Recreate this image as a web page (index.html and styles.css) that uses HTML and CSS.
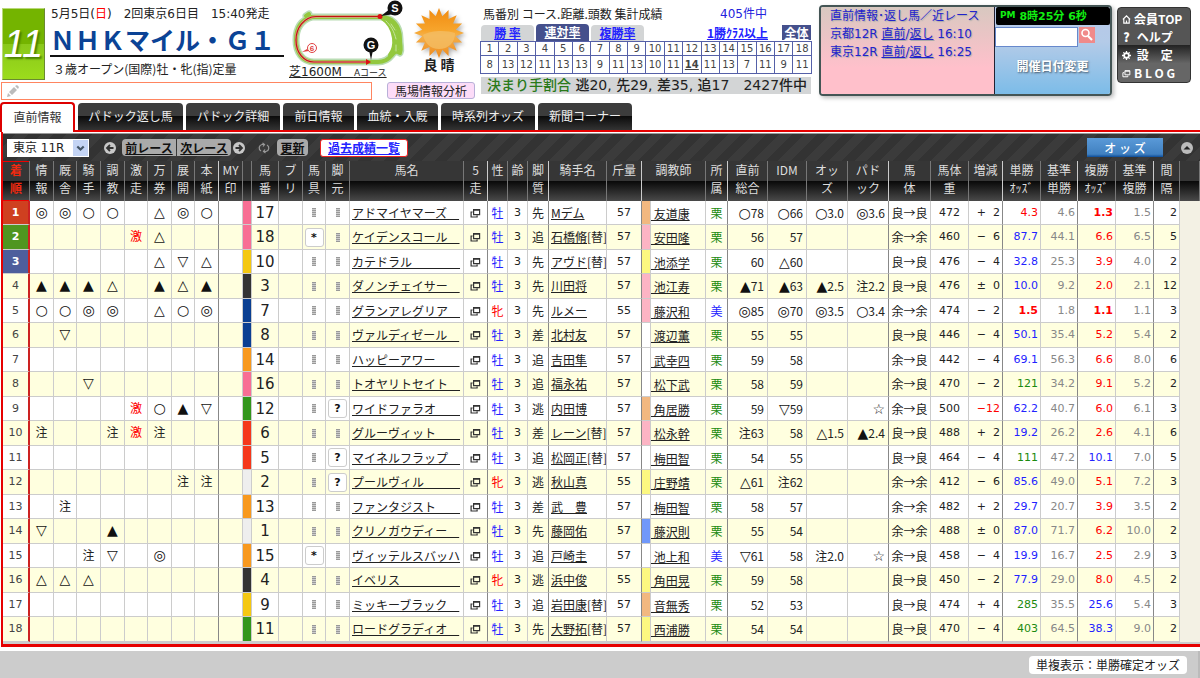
FILE: index.html
```html
<!DOCTYPE html>
<html lang="ja">
<head>
<meta charset="utf-8">
<title>NHKマイル・G1 直前情報</title>
<link rel="stylesheet" href="styles.css">
</head>
<body>
<svg class="defs" aria-hidden="true">
  <symbol id="windows" viewBox="0 0 11 10"><path d="M3.6 1.6h6v5h-6z M3.6 2.1h6 M2.6 4H1.1v5h6V7.6" fill="none" stroke="currentColor" stroke-width="1.2"/></symbol>
</svg>

<header class="top">
  <section class="race">
    <div class="race-main">
      <div class="race-no">11</div>
      <div class="race-info">
        <p class="date">5月5日(<span class="red">日</span>)　2回東京6日目　15:40発走</p>
        <h1>ＮＨＫマイル・Ｇ１</h1>
        <p class="terms">３歳オープン(国際)牡・牝(指)定量</p>
      </div>
      <div class="course">
        <svg viewBox="0 0 116 66" class="course-map" role="img" aria-label="コース図">
          <g fill="none" stroke-linejoin="round" stroke-linecap="round">
            <path d="M16 16l3-2M22 17h68c12 0 20 8 20 22 0 8 2 10 0 14-3-2-5-2-8 2-4 5-8 7-14 7H24C12 62 6 52 6 40s5-20 16-23z" stroke="#b9dcb4" stroke-width="7"/>
            <path d="M16 16l3-2M22 17h68c12 0 20 8 20 22 0 8 2 10 0 14-3-2-5-2-8 2-4 5-8 7-14 7H24C12 62 6 52 6 40s5-20 16-23z" stroke="#93c83e" stroke-width="4"/>
            <path d="M92 18c8 5 11 12 12 20s-1 13-4 17M97 19c5 4 9 12 10 20v10" stroke="#93c83e" stroke-width="4"/>
            <path d="M96 21c5 5 8 10 10 18M101 24l4 6M106 45v6" stroke="#c5e39c" stroke-width="1"/>
            <path d="M90 16.5H26C14 17 6 28 6 40c0 13 8 22 18 22h54" stroke="#e0a08a" stroke-width="2.4"/>
            <path d="M90 16.5H26C14 17 6 28 6 40c0 13 8 22 18 22h54" stroke="#c41212" stroke-width="1.2"/>
          </g>
          <circle cx="90" cy="16.500" r="2.500" fill="#d11"/>
          <path d="M76 59l5 3-5 3z" fill="#d11"/>
          <path d="M91 16l10-8 4 6z M79 50h4l-2 10z" fill="#111"/>
          <circle cx="105" cy="8" r="7.500" fill="#111"/>
          <circle cx="81" cy="45" r="7.500" fill="#111"/>
          <circle cx="22" cy="48" r="4.500" fill="#fff" stroke="#e04040"/>
          <path d="M17 49l-5 3 7-1z" fill="#e04040"/>
          <text x="105" y="12" class="map-letter">S</text>
          <text x="81" y="49" class="map-letter">G</text>
          <text x="22" y="51" class="map-corner">6</text>
        </svg>
        <a href="#course" class="course-name">芝1600M　<small>Aコース</small></a>
      </div>
      <div class="weather">
        <svg viewBox="-26 -26 52 52" class="sun" role="img" aria-label="晴">
          <defs><linearGradient id="sunfill" x1="0" y1="0" x2="0" y2="1"><stop offset="0" stop-color="#f08a10"/><stop offset=".45" stop-color="#f7a52c"/><stop offset=".55" stop-color="#f5b04a"/><stop offset="1" stop-color="#ee8a1c"/></linearGradient></defs>
          <path fill="url(#sunfill)" d="M25 0L16.700 3.300 23.100 9.600 14.100 9.500 17.700 17.700 9.500 14.100 9.600 23.100 3.300 16.700 0 25-3.300 16.700-9.600 23.100-9.500 14.100-17.700 17.700-14.100 9.500-23.100 9.600-16.700 3.300-25 0-16.700-3.300-23.100-9.600-14.100-9.500-17.700-17.700-9.500-14.100-9.600-23.100-3.300-16.700 0-25 3.300-16.700 9.600-23.100 9.500-14.100 17.700-17.700 14.100-9.500 23.100-9.600 16.700-3.300z"/>
          <path fill="#f4bd63" opacity=".8" d="M-16 2C-8-3 8-3 16 0 16 10 9 16 0 16S-14 10-16 2z"/>
        </svg>
        <span>良 晴</span>
      </div>
    </div>
    <div class="memo-row">
      <label class="memo">
        <svg viewBox="0 0 14 14" aria-hidden="true"><path d="M1 13l1-4 3 3z M3 8l5-5 3 3-5 5z M9 2l2-1 2 2-1 2z" fill="#bbb"/></svg>
        <input type="text" aria-label="メモ">
      </label>
      <button class="baba">馬場情報分析</button>
    </div>
  </section>

  <section class="stats">
    <div class="stats-head"><span>馬番別 コース.距離.頭数 集計成績</span><span class="count">405件中</span></div>
    <div class="stats-tabs">
      <a href="#win">勝 率</a><a href="#ren" class="on">連対率</a><a href="#fuku">複勝率</a>
      <a href="#class" class="class-link">1勝ｸﾗｽ以上</a><a href="#all" class="all">全体</a>
    </div>
    <table class="rates">
      <tr><td>1<td>2<td>3<td>4<td>5<td>6<td>7<td>8<td>9<td>10<td>11<td>12<td>13<td>14<td>15<td>16<td>17<td>18</tr>
      <tr><td>8<td>13<td>12<td>11<td>13<td>13<td>9<td>11<td>13<td>10<td>11<td><b>14</b><td>11<td>13<td>7<td>11<td>9<td>11</tr>
    </table>
    <p class="kimarite"><span>決まり手割合</span> 逃20, 先29, 差35, 追17　2427件中</p>
  </section>

  <section class="panel">
    <div class="near">
      <p>直前情報･返し馬／近レース</p>
      <p>京都12R <a href="#k1">直前</a>/<a href="#k2">返し</a> 16:10</p>
      <p>東京12R <a href="#t1">直前</a>/<a href="#t2">返し</a> 16:25</p>
    </div>
    <div class="tools">
      <div class="clock"><small>PM</small> 8時25分 6秒</div>
      <div class="search">
        <input type="text" aria-label="検索">
        <button aria-label="検索する"><svg viewBox="0 0 16 16"><circle cx="6.500" cy="6" r="3.500" fill="none" stroke="#fff" stroke-width="1.600"/><path d="M9 9l4 4" stroke="#fff" stroke-width="2.200"/></svg></button>
      </div>
      <button class="date-change">開催日付変更</button>
    </div>
  </section>

  <nav class="menu">
    <a href="#top"><svg viewBox="0 0 10 10"><path d="M1 5l4-4 4 4M2 4v5h6V4M5 9V6" fill="none" stroke="currentColor" stroke-width="1.300"/></svg>会員TOP</a>
    <a href="#help"><b>?</b>&nbsp;ヘルプ</a>
    <a href="#config"><svg viewBox="0 0 10 10"><circle cx="5" cy="5" r="2.500" fill="none" stroke="currentColor" stroke-width="2"/><path d="M5 0v10M0 5h10M1.500 1.500l2 2M6.500 6.500l2 2M8.500 1.500l-2 2M3.500 6.500l-2 2" stroke="currentColor" stroke-width="1.400"/><circle cx="5" cy="5" r="1.500" fill="#333"/></svg>&nbsp;設　定</a>
    <a href="#blog"><svg><use href="#windows"/></svg>B L O G</a>
  </nav>
</header>

<nav class="tabs">
  <a href="#tab1" class="on">直前情報</a><a href="#tab2" class="w2">パドック返し馬</a><a href="#tab3" class="w3">パドック詳細</a><a href="#tab4" class="w4">前日情報</a><a href="#tab5" class="w5">血統・入厩</a><a href="#tab6" class="w6">時系列オッズ</a><a href="#tab7" class="w6">新聞コーナー</a>
</nav>

<main class="board">
  <div class="bar">
    <span class="picker"><select aria-label="レース選択"><option>東京 11R</option></select><svg viewBox="0 0 14 15" aria-hidden="true"><path d="M4 6l3 3 3-3" fill="none" stroke="#456" stroke-width="2"/></svg></span>
    <div class="pager">
      <svg viewBox="0 0 12 12" class="dot"><circle cx="6" cy="6" r="6" fill="#c8c8c8"/><path d="M9.500 6H4M6 3L3 6l3 3" fill="none" stroke="#333" stroke-width="1.800"/></svg>
      <div class="pair"><button>前レース</button><button>次レース</button></div>
      <svg viewBox="0 0 12 12" class="dot"><circle cx="6" cy="6" r="6" fill="#c8c8c8"/><path d="M2.500 6H8M6 3l3 3-3 3" fill="none" stroke="#333" stroke-width="1.800"/></svg>
    </div>
    <div class="reload"><svg viewBox="0 0 12 12" class="dot"><path d="M6 2.500H4A3.500 3.500 0 003 9M4.500 1L6.500 2.500 5 4.500M6 9.500h2A3.500 3.500 0 009 3M7.500 11l-2-1.500L7 7.500" fill="none" stroke="#999" stroke-width="1.200"/></svg><button>更新</button></div>
    <a href="#past" class="past">過去成績一覧</a>
    <button class="odds">オ ッ ズ</button>
    <svg viewBox="0 0 12 12" class="dot"><circle cx="6" cy="6" r="6" fill="#bbb"/><path d="M2.500 7.500L6 4l3.500 3.500z" fill="#222"/></svg>
  </div>
  <table class="entries">
    <colgroup>
      <col class="c27"><col class="c24"><col class="c23"><col class="c24"><col class="c24"><col class="c23"><col class="c24"><col class="c23"><col class="c24">
      <col class="c24"><col class="c9"><col class="c27"><col class="c24"><col class="c23"><col class="c24"><col class="c114"><col class="c24">
      <col class="c20"><col class="c20"><col class="c21"><col class="c58"><col class="c35"><col class="c9"><col class="c55"><col class="c22">
      <col class="c40"><col class="c39"><col class="c41"><col class="c41"><col class="c42"><col class="c38"><col class="c34">
      <col class="c38"><col class="c37"><col class="c38"><col class="c38"><col class="c26"><col>
    </colgroup>
    <thead><tr>
      <th class="order">着<br>順</th><th>情<br>報</th><th>厩<br>舎</th><th>騎<br>手</th><th>調<br>教</th><th>激<br>走</th><th>万<br>券</th><th>展<br>開</th><th class="s">本<br>紙</th>
      <th>MY<br>印</th><th></th><th>馬<br>番</th><th>ブ<br>リ</th><th>馬<br>具</th><th>脚<br>元</th><th>馬名</th><th class="s">5<br>走</th>
      <th>性</th><th>齢</th><th class="s">脚<br>質</th><th>騎手名</th><th class="s">斤量</th><th colspan="2">調教師</th><th class="s">所<br>属</th>
      <th>直前<br>総合</th><th>IDM</th><th>オッ<br>ズ</th><th class="s">パド<br>ック</th><th>馬<br>体</th><th>馬体<br>重</th><th class="s">増減</th>
      <th>単勝<br>ｵｯｽﾞ</th><th class="s">基準<br>単勝</th><th>複勝<br>ｵｯｽﾞ</th><th class="s">基準<br>複勝</th><th>間<br>隔</th><th></th>
    </tr></thead>
    <tbody id="rows"></tbody>
  </table>
</main>

<footer class="foot"><button>単複表示：単勝確定オッズ</button></footer>
<script src="entries.js"></script>
</body>
</html>
```
FILE: styles.css
```css
* { box-sizing: border-box; }
body {
  margin: 0;
  min-height: 100vh;
  display: flex;
  flex-direction: column;
  background: #fff;
  color: #222;
  font: 12px/18px "DejaVu Sans", "Noto Sans CJK JP", sans-serif;
}
p, h1 { margin: 0; }
button, input, select { font: inherit; color: inherit; margin: 0; padding: 0; border: 0; }
button { cursor: pointer; white-space: nowrap; }
a { color: inherit; }
svg { display: block; flex: none; }
.defs { width: 0; height: 0; position: absolute; }
.red { color: #f00; }

/* page header */
.top { display: flex; align-items: flex-start; height: 102px; white-space: nowrap; }
.race { width: 475px; margin-right: 5px; font-family: "Noto Sans CJK JP", sans-serif; }
.race-main { display: flex; height: 82px; }
.race-no {
  width: 43px; height: 72px; margin: 8px 5px 0 2px;
  border: 1px solid #7a8f50; border-color: #b8d878 #6a8a30 #6a8a30 #b8d878;
  background: linear-gradient(#74b400 0 50%, #8ac81a 50%, #9cdc1c);
  color: #fff; font: italic 38px/70px "Liberation Sans Narrow", "Liberation Sans", sans-serif;
  text-align: center; text-shadow: 2px 2px 2px #4a8000;
}
.race-info { width: 234px; margin-right: 5px; }
.date { font: 12px/18px "DejaVu Sans", "Noto Sans CJK JP", sans-serif; padding: 5px 0 0 1px; }
h1 { font-size: 25px; line-height: 32px; font-weight: bold; color: #0b4396; border-bottom: 2px solid #111; }
.terms { font-size: 12px; line-height: 18px; padding: 3px 0 0 3px; }
.course { width: 122px; }
.course-map { width: 116px; height: 66px; margin-left: 1px; }
.map-letter { font: bold 11px "Liberation Sans", sans-serif; fill: #fff; text-anchor: middle; }
.map-corner { font: bold 8px "Liberation Sans", sans-serif; fill: #e04040; text-anchor: middle; }
.course-name { display: block; line-height: 13px; font-size: 12px; font-family: "DejaVu Sans", "Noto Sans CJK JP", sans-serif; }
.course-name small { font-size: 9px; }
.weather { display: flex; flex-direction: column; align-items: center; width: 56px; padding-top: 7px; font-weight: bold; font-size: 14px; line-height: 10px; }
.sun { width: 52px; height: 52px; filter: drop-shadow(2px 2px 2px #aaa); }
.memo-row { display: flex; justify-content: space-between; }
.memo { display: flex; align-items: center; width: 371px; height: 18px; margin-left: 1px; border: 1px solid #ff8560; }
.memo svg { width: 14px; height: 14px; margin: 0 4px; }
.memo input { flex: 1; min-width: 0; height: 14px; outline: 0; background: none; }
.baba { width: 88px; height: 17px; border: 1px solid #b8b0d8; border-radius: 3px; background: #fcdcf8; line-height: 15px; }

.stats { width: 332px; margin-right: 7px; font-family: "Noto Sans CJK JP", sans-serif; }
.stats-head { display: flex; padding: 5px 0 0 3px; line-height: 18px; }
.count { margin-left: auto; margin-right: 45px; color: #22d; font-family: "DejaVu Sans", "Noto Sans CJK JP", sans-serif; }
.stats-tabs { display: flex; align-items: flex-end; gap: 2px; height: 18px; padding: 0 1px; font-weight: bold; line-height: 16px; }
.stats-tabs a { width: 53px; height: 16px; text-align: center; color: #22f; background: #d3d5d6; border-radius: 4px 4px 0 0; }
.stats-tabs .on { color: #fff; background: #45508c; height: 17px; }
.stats-tabs .class-link { width: auto; margin-left: auto; background: none; }
.stats-tabs .all { width: 29px; margin-left: 12px; color: #fff; background: #45508c; border-radius: 0; height: 15px; margin-bottom: 1px; line-height: 15px; }
.rates { width: 100%; table-layout: fixed; border-collapse: collapse; font-size: 10px; line-height: 13px; text-align: center; color: #444; font-family: "DejaVu Sans", sans-serif; }
.rates td { border: 1px solid #5560a8; padding: 0; }
.rates tr:last-child td { height: 18px; }
.rates b { text-decoration: underline; }
.kimarite { margin: 3px 1px 0; background: #d3d5d6; font: 500 14px/17px "DejaVu Sans", "Noto Sans CJK JP", sans-serif; color: #222; padding-left: 6px; }
.kimarite span { color: #2a7a1a; }

.panel { display: flex; width: 293px; height: 91px; margin: 5px 5px 0 0; border: 2px solid #455; border-radius: 4px; box-shadow: 2px 2px 4px #bbb; overflow: hidden; }
.near { width: 174px; border-right: 1px solid #223; background: linear-gradient(#d8c8c0, #ffc0cb 70%); color: #22c; padding-left: 9px; font: 12px/18px "DejaVu Sans", "Noto Sans CJK JP", sans-serif; text-shadow: 1px 1px 1px #aaa; }
.tools { flex: 1; background: linear-gradient(#b8c8e8, #b4cbe8 40%, #7cbce8); display: flex; flex-direction: column; align-items: flex-start; }
.clock { align-self: stretch; margin: 0 0 2px 1px; height: 18px; background: #000; border-radius: 2px; color: #1e1; font: bold 11px/17px "DejaVu Sans", "Noto Sans CJK JP", sans-serif; padding-left: 4px; }
.clock small { font-size: 9px; vertical-align: 2px; }
.search { display: flex; gap: 1px; }
.search input { width: 83px; height: 20px; background: #fff; border: 1px solid #68c; outline: 0; padding: 0 2px; }
.search button { width: 16px; height: 16px; background: #f08a8a; }
.date-change { align-self: center; margin-top: 10px; background: none; color: #fff; font: bold 12px/18px "Noto Sans CJK JP", sans-serif; text-shadow: 1px 1px 2px #456; }
.menu { width: 74px; height: 76px; margin-top: 7px; padding: 2px 0 0 4px; border: 1px solid #333; border-radius: 4px; background: linear-gradient(#555 0 50%, #222 50%, #666 75%); color: #fff; font: bold 12px/18px "Noto Sans CJK JP", sans-serif; }
.menu a { display: flex; align-items: center; gap: 3px; height: 18px; text-decoration: none; }
.menu svg { width: 9px; height: 9px; }
.menu b { width: 9px; text-align: center; }

/* page tabs */
.tabs { display: flex; align-items: flex-end; gap: 3px; height: 28px; white-space: nowrap; font-family: "Noto Sans CJK JP", sans-serif; }
.tabs a { height: 27px; line-height: 26px; text-align: center; text-decoration: none; color: #eee; background: linear-gradient(#3c3c3c 0 50%, #0c0c0c 50%, #333); border-radius: 4px 4px 0 0; }
.tabs .on { position: relative; width: 75px; height: 30px; margin-bottom: -2px; color: #333; background: #fff; border: 2px solid #d00; border-bottom: 0; }
.w2 { width: 105px; } .w3 { width: 94px; } .w4 { width: 71px; } .w5 { width: 81px; } .w6 { width: 94px; }

.board { margin: 0 0 0 1px; border: solid #e60000; border-width: 2px 0 3px 2px; }
.bar { display: flex; align-items: center; height: 28px; margin-top: 1px; padding: 0 7px 0 4px; border-top: 1px solid #999; background: repeating-linear-gradient(135deg, #333 0 9px, #3b3b3b 9px 18px); font-family: "Noto Sans CJK JP", sans-serif; }
.dot { width: 12px; height: 12px; }
.picker { display: flex; align-items: center; width: 82px; height: 18px; background: #fff; position: relative; }
.picker select { width: 100%; height: 18px; padding-left: 6px; appearance: none; background: none; font: 12px/18px "DejaVu Sans", "Noto Sans CJK JP", sans-serif; }
.picker svg { position: absolute; right: 1px; top: 1px; width: 15px; height: 16px; background: #c4d4f4; pointer-events: none; }
.pager { display: flex; align-items: center; gap: 6px; margin-left: 15px; }
.pager .pair + .dot { margin-left: -4px; }
.pair { display: flex; gap: 1px; }
.bar button { height: 17px; line-height: 16px; background: #aaa; color: #111; text-decoration: underline; font-weight: bold; }
.pair button { width: 54px; }
.pair button:first-child { border-radius: 4px 0 0 4px; }
.pair button:last-child { border-radius: 0 4px 4px 0; }
.reload { display: flex; align-items: center; gap: 7px; margin-left: 13px; }
.reload button { width: 31px; border-radius: 4px; }
.past { width: 88px; height: 18px; margin-left: 12px; border: 1px solid #e22; border-radius: 3px; background: #fff; color: #22f; font-weight: bold; line-height: 16px; text-align: center; }
.bar .odds { width: 76px; height: 19px; margin: 0 18px 0 auto; color: #fff; background: linear-gradient(#5a9ad8, #4080c0 85%, #0c4c98); text-decoration: none; font-weight: 500; }

/* entries table */
.entries { width: 100%; table-layout: fixed; border-collapse: separate; border-spacing: 0; border-bottom: 2px solid #ccc; white-space: nowrap; }
.c9 { width: 9px; } .c20 { width: 20px; } .c21 { width: 21px; } .c22 { width: 22px; } .c23 { width: 23px; } .c24 { width: 24px; }
.c26 { width: 26px; } .c27 { width: 27px; } .c34 { width: 34px; } .c35 { width: 35px; } .c37 { width: 37px; } .c38 { width: 38px; }
.c39 { width: 39px; } .c40 { width: 40px; } .c41 { width: 41px; } .c42 { width: 42px; } .c55 { width: 55px; } .c58 { width: 58px; } .c114 { width: 114px; }
.entries th { height: 40px; padding: 0; vertical-align: top; font: 12px/18px "Noto Sans CJK JP", sans-serif; color: #ddd; background: linear-gradient(#363636 0 50%, #080808 50%, #4a4a4a); border-right: 1px solid #777; }
.entries th.s { border-right-color: #ccc; }
.entries th.order { color: #f02a10; font-weight: bold; box-shadow: inset 0 1px #e00, inset 0 -1px #e00; }
.entries td { height: 24px; padding: 0; overflow: hidden; border-right: 1px solid #ccc; border-bottom: 1px solid #ccc; line-height: 20px; text-align: center; }
.entries tbody tr:nth-child(even) { background: #ffffdf; }
.entries tbody tr:nth-child(even) td { height: 25px; }
.entries td.s { border-right-color: #888; }
.entries td.rank { border-right: 2px solid #c22; font-size: 11px; color: #444; }
.entries tr:nth-child(-n+3) td.rank { color: #fff; }
.entries tr:nth-child(1) .rank { background: #cf4020; }
.entries tr:nth-child(2) .rank { background: #4f9620; }
.entries tr:nth-child(3) .rank { background: #4e5e9c; }
.entries .jp, .entries .idx { font-family: "Noto Sans CJK JP", sans-serif; }
.entries .mark { font-family: "DejaVu Sans", "Noto Sans CJK JP", sans-serif; }
.entries .shape { font: 14px/18px "DejaVu Sans", sans-serif; color: #111; }
.entries td.num { font-size: 15px; }
.entries .idx { text-align: right; padding-right: 3px; }
.entries td.left { text-align: left; padding-left: 2px; }
.entries .name a { white-space: pre; }
.entries td.trainer { text-align: left; padding-top: 2px; line-height: 18px; }
.trainer a { white-space: pre; }
.entries td.r { text-align: right; padding-right: 2px; font-size: 11px; }
.entries td.n { font-size: 11px; }
.entries td.fill { background: #f3f1e4; border: 0; }
.entries td svg { width: 11px; height: 10px; margin: 0 auto; color: #333; }
.grip { display: block; width: 4px; height: 9px; margin: 0 auto; background: repeating-linear-gradient(#999 0 1px, #ccc 1px 2px); }
.gear { display: block; width: 19px; height: 19px; margin: 0 auto; border: 1px solid #ccc; border-radius: 3px; background: #fff; color: #111; font: bold 11px/17px "DejaVu Sans", sans-serif; }
.blue { color: #22f; } .green { color: #1c8a10; } .gray { color: #888; } .hot { font-weight: bold; }
.f1 { background: #eee; } .f2 { background: #333; } .f3 { background: #f5371b; } .f4 { background: #0a3f92; }
.f5 { background: #f4c812; } .f6 { background: #33961c; } .f7 { background: #f8991e; } .f8 { background: #f86e94; }
.t- { background: #fff; } .to { background: #f2b880; } .tp { background: #fcb4c4; } .ty { background: #fcf880; } .tb { background: #7098fa; }

.foot { flex: 1; display: flex; justify-content: flex-end; align-items: center; margin-top: 4px; min-height: 27px; padding-right: 11px; background: #ccc; border-right: 2px solid #bbb; }
.foot button { width: 158px; height: 18px; border-radius: 4px; background: #fff; font-family: "Noto Sans CJK JP", sans-serif; line-height: 18px; }
```
FILE: entries.js
```js
// marks | number | gear | legs | name | sex | style | jockey | change | kg | trainer colour | trainer | base | total | IDM | odds | paddock | track | weight | diff | win | std | place | std | gap
const entries = `
◎◎○○_△◎○|17|||アドマイヤマーズ|牡|先|Mデム||57|o|友道康|栗|○78|○66|○3.0|◎3.6|良→良|472|+2|4.3|4.6|1.3|1.5|2
____激△__|18|*||ケイデンスコール|牡|追|石橋脩|替|57|p|安田隆|栗|56|57|||余→余|460|−6|87.7|44.1|6.6|6.5|5
_____△▽△|10|||カテドラル|牡|先|アヴド|替|57|y|池添学|栗|60|△60|||良→良|476|−4|32.8|25.3|3.9|4.0|2
▲▲▲△_▲△▲|3|||ダノンチェイサー|牡|先|川田将||57|p|池江寿|栗|▲71|▲63|▲2.5|注2.2|良→良|476|±0|10.0|9.2|2.0|2.1|12
○○◎◎_△○◎|7|||グランアレグリア|牝|先|ルメー||55|p|藤沢和|美|◎85|◎70|◎3.5|○3.4|余→余|474|−2|1.5|1.8|1.1|1.1|3
_▽______|8|||ヴァルディゼール|牡|差|北村友||57|-|渡辺薫|栗|55|55|||良→良|446|−4|50.1|35.4|5.2|5.4|2
________|14|||ハッピーアワー|牡|追|吉田隼||57|-|武幸四|栗|59|58|||余→良|442|−4|69.1|56.3|6.6|8.0|6
__▽_____|16|||トオヤリトセイト|牡|追|福永祐||57|-|松下武|栗|58|59|||余→良|470|−2|121|34.2|9.1|5.2|2
____激○▲▽|12||?|ワイドファラオ|牡|逃|内田博||57|o|角居勝|栗|59|▽59||☆|余→良|500|−12|62.2|40.7|6.0|6.1|3
注__注激注__|6|||グルーヴィット|牡|差|レーン|替|57|p|松永幹|栗|注63|58|△1.5|▲2.4|良→良|488|+2|19.2|26.2|2.6|4.1|6
________|5||?|マイネルフラップ|牡|追|松岡正|替|57|-|梅田智|栗|54|55|||良→良|464|−4|111|47.2|10.1|7.0|5
______注注|2||?|プールヴィル|牝|逃|秋山真||55|y|庄野靖|栗|△61|注62|||余→余|412|−6|85.6|49.0|5.1|7.2|3
_注______|13|||ファンタジスト|牡|差|武　豊||57|-|梅田智|栗|58|57|||余→余|482|+2|29.7|20.7|3.9|3.5|2
▽__▲____|1|||クリノガウディー|牡|先|藤岡佑||57|b|藤沢則|栗|55|54|||余→余|488|±0|87.0|71.7|6.2|10.0|2
__注▽_◎__|15|*||ヴィッテルスバッハ|牡|追|戸崎圭||57|-|池上和|美|▽61|58|注2.0|☆|余→良|458|−4|19.9|16.7|2.5|2.9|3
△△△_____|4|||イベリス|牝|逃|浜中俊||55|y|角田晃|栗|59|58|||良→良|450|−2|77.9|29.0|8.0|4.5|2
________|9|||ミッキーブラック|牡|追|岩田康|替|57|o|音無秀|栗|52|53|||良→良|474|+4|285|35.5|25.6|5.4|3
________|11|||ロードグラディオ|牡|先|大野拓|替|57|y|西浦勝|栗|54|54|||良→良|470|−4|403|64.5|38.3|9.0|2`;

const frame = n => n > 15 ? 8 : n > 12 ? 7 : Math.ceil(n / 2);
const td = (cls, html = '') => `<td class="${cls}">${html}</td>`;
const gear = v => v ? `<button class="gear">${v}</button>` : '<i class="grip"></i>';
const price = v => v >= 100 ? 'green' : v >= 10 ? 'blue' : v < 2 ? 'red hot' : 'red';
const shape = v => v.replace(/[◎○△▲▽☆]/, '<span class="shape">$&</span>');

document.getElementById('rows').innerHTML = entries.trim().split('\n').map((line, i) => {
  const [marks, no, kit, leg, name, sex, style, jockey, change, kg, tc, trainer, base,
    total, idm, odds, paddock, track, weight, diff, win, std, place, std2, gap] = line.split('|');
  return '<tr>' + td('rank', i < 3 ? `<b>${i + 1}</b>` : i + 1) +
    [...marks].map((m, k) => td('mark' + (m === '激' ? ' red' : '') + (k === 7 ? ' s' : ''), m === '_' ? '' : shape(m))).join('') +
    td('') + td('f' + frame(+no)) + td('num', no) + td('') + td('', gear(kit)) + td('', gear(leg)) +
    td('jp left name', `<a href="#h${no}">${name.padEnd(9, '　')}</a>`) +
    td('s', '<svg><use href="#windows"/></svg>') +
    td('jp ' + (sex === '牡' ? 'blue' : 'red'), sex) + td('n', 3) + td('jp s', style) +
    td('jp left', `<a href="#j${no}">${jockey}</a>${change ? `[${change}]` : ''}`) + td('n s', kg) +
    td('t' + tc) + td('jp trainer', `<a href="#t${no}"> ${trainer}</a>`) +
    td('jp s ' + (base === '栗' ? 'green' : 'blue'), base) +
    td('idx', shape(total)) + td('idx', shape(idm)) + td('idx', shape(odds)) + td('idx s', shape(paddock)) +
    td('jp', track) + td('n', weight) +
    td('r s' + (diff.length > 2 ? ' red' : ''), diff[0] + diff.slice(1).padStart(2, '\u2007')) +
    td('r ' + price(+win), win) + td('r s gray', std) + td('r ' + price(+place), place) + td('r s gray', std2) +
    td('r', gap) + td('fill') + '</tr>';
}).join('');
```
